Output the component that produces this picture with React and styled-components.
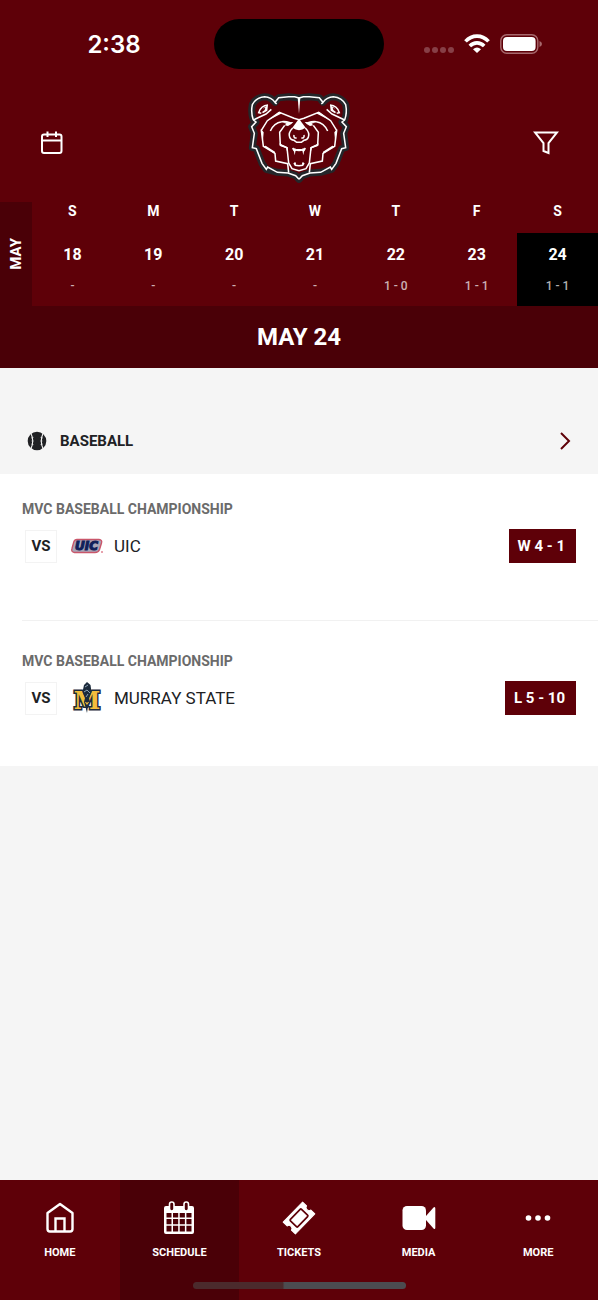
import React, { useState } from "react";
import styled, { createGlobalStyle } from "styled-components";

const week = [
  { day: "S", date: 18, result: "-" },
  { day: "M", date: 19, result: "-" },
  { day: "T", date: 20, result: "-" },
  { day: "W", date: 21, result: "-" },
  { day: "T", date: 22, result: "1 - 0" },
  { day: "F", date: 23, result: "1 - 1" },
  { day: "S", date: 24, result: "1 - 1" },
];

const BearHalf = () => (
  <>
    <path d="M191 40 L178 36 L160 36 L130 39 L119 53 Q108 37 88 36 Q62 38 51 60 Q46 84 54 106 M119 53 L124 58 M54 106 L62 112 L49 126 L57 146 L51 189 L63 192 L80 236 L93 254 L97 247 L126 263 L158 265 L181 273 L191 284" />
    <path d="M54 106 L92 88 L108 74" />
    <path d="M191 105 L176 101 L132 83 L96 108 L78 137 L84 185 L119 206 L121 229 L157 237 L160 264" />
    <path d="M105 139 Q116 114 139 111 Q150 109 164 114" />
    <path d="M148 122 L133 143 L135 181 L155 189 L160 235 L170 252 L191 258" />
    <path d="M172 130 Q158 144 163 158 Q166 166 176 167 L184 173 H191" />
    <path d="M172 190 L176 197 L191 195 M176 235 L180 242 L191 243" />
    <path fill="#fff" stroke="none" d="M191 102 L171 129 Q181 136 191 137 Z" />
    <path fill="#fff" stroke="none" d="M140 113 L174 112 L168 118 L158 124 L148 122 L153 117 Z" />
    <path fill="#fff" stroke="none" d="M130 82 L140 86 L105 104 L96 110 Z M76 132 L85 143 L83 166 Z M84 185 L91 183 L119 201 L119 208 Z M132 176 L157 188 L157 206 L152 190 L134 184 Z" />
    <path fill="#fff" stroke="none" d="M174 190 L182 192 L178 212 Z M182 193 H191 V200 L184 199 Z M176 234 L181 233 L183 243 Z" />
    <path d="M176 151 Q174 161 184 160" />
    <path d="M98 61 Q76 63 70 84 L78 86" />
    <path fill="#fff" stroke="none" d="M98 61 L96 78 L83 86 L80 82 L88 76 L90 69 L82 72 Z" />
  </>
);

const BearLogo = () => (
  <svg width="104" height="92" viewBox="35 25 312 276" fill="none" role="img" aria-label="Bears">
    <path
      d="M191 40 L160 36 L130 39 L119 53 Q108 37 88 36 Q62 38 51 60 Q46 84 54 106 L62 112 L49 126 L57 146 L51 189 L63 192 L80 236 L93 254 L126 263 L158 265 L181 273 L191 284 L201 273 L224 265 L256 263 L289 254 L302 236 L319 192 L331 189 L325 146 L333 126 L320 112 L328 106 Q336 84 331 60 Q320 38 294 36 Q274 37 263 53 L252 39 L222 36 Z"
      fill="#5e0008"
      stroke="#24262a"
      strokeWidth="21"
      strokeLinejoin="round"
    />
    <g stroke="#fff" strokeWidth="4.6" strokeLinejoin="miter">
      <BearHalf />
      <g transform="matrix(-1 0 0 1 382 0)">
        <BearHalf />
      </g>
      <path d="M187 38 L191 88 L195 38 Z" fill="#fff" stroke="none" />
    </g>
  </svg>
);

const WifiIcon = () => (
  <svg width="26" height="20" viewBox="0 0 26 20" fill="none" stroke="#fff" strokeWidth="3.6">
    <path d="M1.5 7.4 C8 0.4 18 0.4 24.5 7.4" />
    <path d="M5.8 12 C10 7.8 16 7.8 20.2 12" />
    <path d="M13 19 L9 15.2 Q13 12 17 15.2 Z" fill="#fff" stroke="none" />
  </svg>
);

const BatteryIcon = () => (
  <svg width="42" height="20" viewBox="0 0 42 20">
    <rect x="0.8" y="0.8" width="37" height="18.4" rx="6" fill="none" stroke="#a7686d" strokeWidth="1.4" />
    <rect x="3" y="3" width="32.6" height="14" rx="4" fill="#fff" />
    <path d="M39.5 7 Q42 8 42 10 Q42 12 39.5 13 Z" fill="#a7686d" />
  </svg>
);

const CalendarIcon = () => (
  <svg width="24" height="26" viewBox="0 0 24 26" fill="none" stroke="#fff" strokeWidth="2">
    <rect x="2" y="4.5" width="19.5" height="18.5" rx="2" />
    <path d="M2 10.5 H21.5 M7.5 1.5 V7 M16 1.5 V7" />
  </svg>
);

const FilterIcon = () => (
  <svg width="26" height="24" viewBox="0 0 26 24" fill="none" stroke="#fff" strokeWidth="2">
    <path d="M2 1.5 H24 L15.5 12 V22 L10.5 20 V12 Z" />
  </svg>
);

const BallIcon = () => (
  <svg width="20" height="20" viewBox="0 0 20 20">
    <circle cx="10" cy="10" r="9.3" fill="#202124" />
    <g fill="none" stroke="#f5f5f5">
      <path d="M4 2.5 Q7.5 10 4 17.5 M16 2.5 Q12.5 10 16 17.5" strokeWidth="1.1" />
      <path d="M4 7 L6.6 6.4 M4.4 10 H6.6 M4 13 L6.6 13.6 M16 7 L13.4 6.4 M15.6 10 H13.4 M16 13 L13.4 13.6" strokeWidth="0.5" />
    </g>
  </svg>
);

const ChevronIcon = () => (
  <svg width="12" height="18" viewBox="0 0 12 18" fill="none" stroke="#5e0008" strokeWidth="2">
    <path d="M2 1 L10 9 L2 17" />
  </svg>
);

const UicLogo = () => (
  <svg width="34" height="34" viewBox="0 0 34 34" role="img" aria-label="UIC logo">
    <path
      d="M7 10.5 H29 Q32.5 11 31.5 14 L29.5 20.5 Q28.5 23.5 25 23.5 H4.5 Q0.8 23 2 19.5 L3.8 13 Q4.5 10.5 7 10.5 Z"
      fill="#a9a6b8"
      stroke="#c9566a"
      strokeWidth="1.4"
    />
    <text
      x="16.5"
      y="21.4"
      textAnchor="middle"
      fontFamily="DejaVu Sans, sans-serif"
      fontSize="12"
      fontWeight="900"
      fontStyle="italic"
      fill="#10205a"
      stroke="#10205a"
      strokeWidth="1.1"
    >
      UIC
    </text>
    <rect x="31" y="22.5" width="2" height="1" fill="#d0475c" />
  </svg>
);

const MurrayLogo = () => (
  <svg width="34" height="34" viewBox="0 0 34 34" role="img" aria-label="Murray State logo">
    <text
      x="17"
      y="28"
      textAnchor="middle"
      fontFamily="DejaVu Serif, serif"
      fontSize="24"
      fontWeight="700"
      fill="#f3bd3b"
      stroke="#1c2b3c"
      strokeWidth="3"
      paintOrder="stroke"
    >
      M
    </text>
    <path d="M17 1 L20.5 4 L21.5 11 L19 17 L20 21 L18 25 L17 32 L15.5 26 L14 21 L15 17 L12.5 11 L14 4 Z" fill="#1c2b3c" />
    <path d="M15 6 L18 4 M14 11 L17 9 L20 12 M16 16 L18 13" stroke="#8fa3b5" strokeWidth="1" fill="none" />
    <path d="M15.5 21 L17 23 L18.5 21" stroke="#f3bd3b" strokeWidth="1.2" fill="none" />
  </svg>
);

const HomeIcon = () => (
  <svg width="36" height="36" viewBox="0 0 36 36" fill="none" stroke="#fff" strokeWidth="2.4" strokeLinejoin="round">
    <path d="M5.5 13 L18 4 L30.5 13 V29 Q30.5 31.5 28 31.5 H8 Q5.5 31.5 5.5 29 Z" />
    <path d="M13.5 31 V18.5 H22.5 V31" strokeLinejoin="miter" />
  </svg>
);

const ScheduleIcon = () => (
  <svg width="36" height="36" viewBox="0 0 36 36" fill="none">
    <path
      fill="#fff"
      fillRule="evenodd"
      d="M5 6 H31 Q33 6 33 8 V32 Q33 34 31 34 H5 Q3 34 3 32 V8 Q3 6 5 6 Z M5.5 13 V17.5 H10.5 V13 Z M12 13 V17.5 H17.2 V13 Z M18.7 13 V17.5 H23.9 V13 Z M25.4 13 V17.5 H30.5 V13 Z M5.5 19 V24.2 H10.5 V19 Z M12 19 V24.2 H17.2 V19 Z M18.7 19 V24.2 H23.9 V19 Z M25.4 19 V24.2 H30.5 V19 Z M5.5 25.7 V31.5 H10.5 V25.7 Z M12 25.7 V31.5 H17.2 V25.7 Z M18.7 25.7 V31.5 H23.9 V25.7 Z M25.4 25.7 V31.5 H30.5 V25.7 Z"
    />
    <rect x="8.5" y="2" width="4.5" height="9" rx="2.2" fill="#4a0007" stroke="#fff" strokeWidth="1.6" />
    <rect x="23" y="2" width="4.5" height="9" rx="2.2" fill="#4a0007" stroke="#fff" strokeWidth="1.6" />
  </svg>
);

const TicketIcon = () => (
  <svg width="36" height="36" viewBox="0 0 36 36">
    <g transform="rotate(-46 18 18)">
      <path
        d="M4 9.5 H32 V15 Q29.5 15.5 29.5 18 Q29.5 20.5 32 21 V26.5 H4 V21 Q6.5 20.5 6.5 18 Q6.5 15.5 4 15 Z"
        fill="#fff"
        stroke="#fff"
        strokeWidth="1"
        strokeLinejoin="round"
      />
      <rect x="10" y="12.8" width="16" height="10.4" rx="1" fill="none" stroke="#5e0008" strokeWidth="1.7" />
    </g>
  </svg>
);

const VideoIcon = () => (
  <svg width="36" height="36" viewBox="0 0 36 36" fill="#fff">
    <rect x="1.500" y="6" width="23.500" height="24" rx="4.500" />
    <path d="M25 16 L32.500 7.500 Q34.300 6 34.300 8.500 V27.500 Q34.300 30 32.500 28.500 L25 20 Z" />
  </svg>
);

const MoreIcon = () => (
  <svg width="36" height="36" viewBox="0 0 36 36" fill="#fff">
    <circle cx="8.500" cy="18" r="2.800" />
    <circle cx="18" cy="18" r="2.800" />
    <circle cx="27.500" cy="18" r="2.800" />
  </svg>
);

const games = [
  { event: "MVC BASEBALL CHAMPIONSHIP", team: "UIC", logo: UicLogo, score: "W 4 - 1" },
  { event: "MVC BASEBALL CHAMPIONSHIP", team: "MURRAY STATE", logo: MurrayLogo, score: "L 5 - 10" },
];

const tabs = [
  { label: "HOME", icon: HomeIcon },
  { label: "SCHEDULE", icon: ScheduleIcon },
  { label: "TICKETS", icon: TicketIcon },
  { label: "MEDIA", icon: VideoIcon },
  { label: "MORE", icon: MoreIcon },
];

export default function App() {
  const [selected, setSelected] = useState(24);
  const [tab, setTab] = useState("SCHEDULE");

  return (
    <Page>
      <GlobalStyle />
      <Header>
        <StatusBar>
          <Time>2:38</Time>
          <Island />
          <StatusIcons>
            <Signal>
              <Dot />
              <Dot />
              <Dot />
              <Dot />
            </Signal>
            <WifiIcon />
            <BatteryIcon />
          </StatusIcons>
        </StatusBar>
        <Toolbar>
          <IconButton aria-label="Calendar">
            <CalendarIcon />
          </IconButton>
          <BearLogo />
          <IconButton aria-label="Filter">
            <FilterIcon />
          </IconButton>
        </Toolbar>
        <WeekStrip>
          <Month>
            <MonthText>MAY</MonthText>
          </Month>
          <Days>
            {week.map((item) => (
              <Day key={item.date}>
                <DayName>{item.day}</DayName>
                <DateButton
                  $active={selected === item.date}
                  aria-pressed={selected === item.date}
                  onClick={() => setSelected(item.date)}
                >
                  <DateNumber>{item.date}</DateNumber>
                  <Result>{item.result}</Result>
                </DateButton>
              </Day>
            ))}
          </Days>
        </WeekStrip>
        <DateTitle>MAY {selected}</DateTitle>
      </Header>

      <Main>
        <SportRow href="#baseball">
          <BallIcon />
          <SportName>BASEBALL</SportName>
          <ChevronIcon />
        </SportRow>
        <GameList>
          {games.map((game) => (
            <Game key={game.team}>
              <EventName>{game.event}</EventName>
              <GameRow>
                <Versus>VS</Versus>
                <game.logo />
                <Team>{game.team}</Team>
                <Score>{game.score}</Score>
              </GameRow>
            </Game>
          ))}
        </GameList>
      </Main>

      <TabBar>
        {tabs.map((item) => (
          <Tab key={item.label} $active={tab === item.label} onClick={() => setTab(item.label)}>
            <item.icon />
            {item.label}
          </Tab>
        ))}
        <HomeIndicator />
      </TabBar>
    </Page>
  );
}

const GlobalStyle = createGlobalStyle`
  * {
    box-sizing: border-box;
  }

  body {
    margin: 0;
    background-color: #f5f5f5;
    font-family: Roboto, "Liberation Sans", sans-serif;
  }

  button {
    border: none;
    padding: 0;
    background: none;
    color: inherit;
    font-family: inherit;
    cursor: pointer;
  }

  svg {
    display: block;
    flex-shrink: 0;
  }
`;

const Page = styled.div`
  display: flex;
  flex-direction: column;
  min-height: 100vh;
`;

const Header = styled.header`
  background-color: #5e0008;
  color: #fff;
`;

const StatusBar = styled.div`
  display: grid;
  grid-template-columns: 1fr 170px 1fr;
  align-items: center;
  padding-top: 19px;
`;

const Time = styled.div`
  padding-left: 14px;
  text-align: center;
  font-family: Inter, sans-serif;
  font-size: 24px;
  font-weight: 600;
`;

const Island = styled.div`
  height: 50px;
  border-radius: 25px;
  background-color: #000;
`;

const StatusIcons = styled.div`
  display: flex;
  align-items: center;
  justify-content: center;
  gap: 10px;
  padding-right: 16px;
`;

const Signal = styled.div`
  display: flex;
  gap: 2px;
  padding-top: 12px;
`;

const Dot = styled.span`
  width: 6px;
  height: 6px;
  border-radius: 50%;
  background-color: #873f47;
`;

const Toolbar = styled.div`
  display: flex;
  align-items: flex-end;
  justify-content: space-between;
  padding: 24px 32px 17px;
`;

const IconButton = styled.button`
  display: flex;
  align-items: center;
  justify-content: center;
  width: 40px;
  height: 40px;
  margin-bottom: 22px;
`;

const WeekStrip = styled.div`
  display: flex;
`;

const Month = styled.div`
  display: flex;
  align-items: center;
  justify-content: center;
  width: 32px;
  background-color: #4a0007;
`;

const MonthText = styled.span`
  writing-mode: vertical-rl;
  transform: rotate(180deg);
  font-size: 15px;
  font-weight: 700;
`;

const Days = styled.div`
  display: grid;
  flex: 1;
  grid-template-columns: repeat(7, 1fr);
`;

const Day = styled.div`
  text-align: center;
`;

const DayName = styled.div`
  height: 31px;
  font-size: 14px;
  font-weight: 700;
  line-height: 18px;
`;

const DateButton = styled.button`
  display: flex;
  flex-direction: column;
  align-items: center;
  gap: 11px;
  width: 100%;
  padding: 12px 0 10px;
  background-color: ${(props) => (props.$active ? "#000" : "transparent")};
`;

const DateNumber = styled.span`
  font-size: 16px;
  font-weight: 700;
  line-height: 20px;
`;

const Result = styled.span`
  color: rgba(255, 255, 255, 0.7);
  font-size: 12px;
  font-weight: 500;
  line-height: 20px;
`;

const DateTitle = styled.h1`
  margin: 0;
  background-color: #4a0007;
  font-size: 24px;
  font-weight: 700;
  line-height: 62px;
  text-align: center;
`;

const Main = styled.main`
  flex: 1;
  padding-top: 40px;
`;

const SportRow = styled.a`
  display: flex;
  align-items: center;
  height: 66px;
  padding: 0 27px;
  color: #202124;
  text-decoration: none;
`;

const SportName = styled.span`
  flex: 1;
  padding-left: 13px;
  font-size: 15px;
  font-weight: 700;
`;

const GameList = styled.div`
  background-color: #fff;
  padding-left: 22px;
`;

const Game = styled.article`
  padding: 25px 22px 57px 0;

  & + & {
    border-top: 1px solid #f1f1f1;
    padding-top: 30px;
    padding-bottom: 51px;
  }
`;

const EventName = styled.h2`
  margin: 0;
  color: #6b6b6b;
  font-size: 14px;
  font-weight: 700;
  line-height: 20px;
`;

const GameRow = styled.div`
  display: flex;
  align-items: center;
  padding: 10px 0 0 3px;
`;

const Versus = styled.span`
  width: 32px;
  margin-right: 13px;
  border: 1px solid #f3f3f3;
  color: #202124;
  font-size: 15px;
  font-weight: 700;
  line-height: 31px;
  text-align: center;
`;

const Team = styled.span`
  flex: 1;
  padding-left: 10px;
  color: #202124;
  font-size: 17px;
  font-weight: 400;
`;

const Score = styled.span`
  padding: 0 11px 0 9px;
  background-color: #5e0008;
  color: #fff;
  font-size: 15px;
  font-weight: 700;
  line-height: 34px;
`;

const TabBar = styled.nav`
  position: sticky;
  bottom: 0;
  display: grid;
  grid-template-columns: repeat(5, 1fr);
  height: 120px;
  background-color: #5e0008;
  color: #fff;
`;

const Tab = styled.button`
  display: flex;
  flex-direction: column;
  align-items: center;
  gap: 8px;
  padding-top: 20px;
  background-color: ${(props) => (props.$active ? "#4a0007" : "transparent")};
  font-size: 11px;
  font-weight: 700;
  line-height: 18px;
`;

const HomeIndicator = styled.div`
  position: absolute;
  right: 0;
  bottom: 11px;
  left: 0;
  width: 213px;
  height: 7px;
  margin: 0 auto;
  border-radius: 4px;
  background: linear-gradient(to right, #4b2a2c 42%, #4c4c50 43%);
  pointer-events: none;
`;
